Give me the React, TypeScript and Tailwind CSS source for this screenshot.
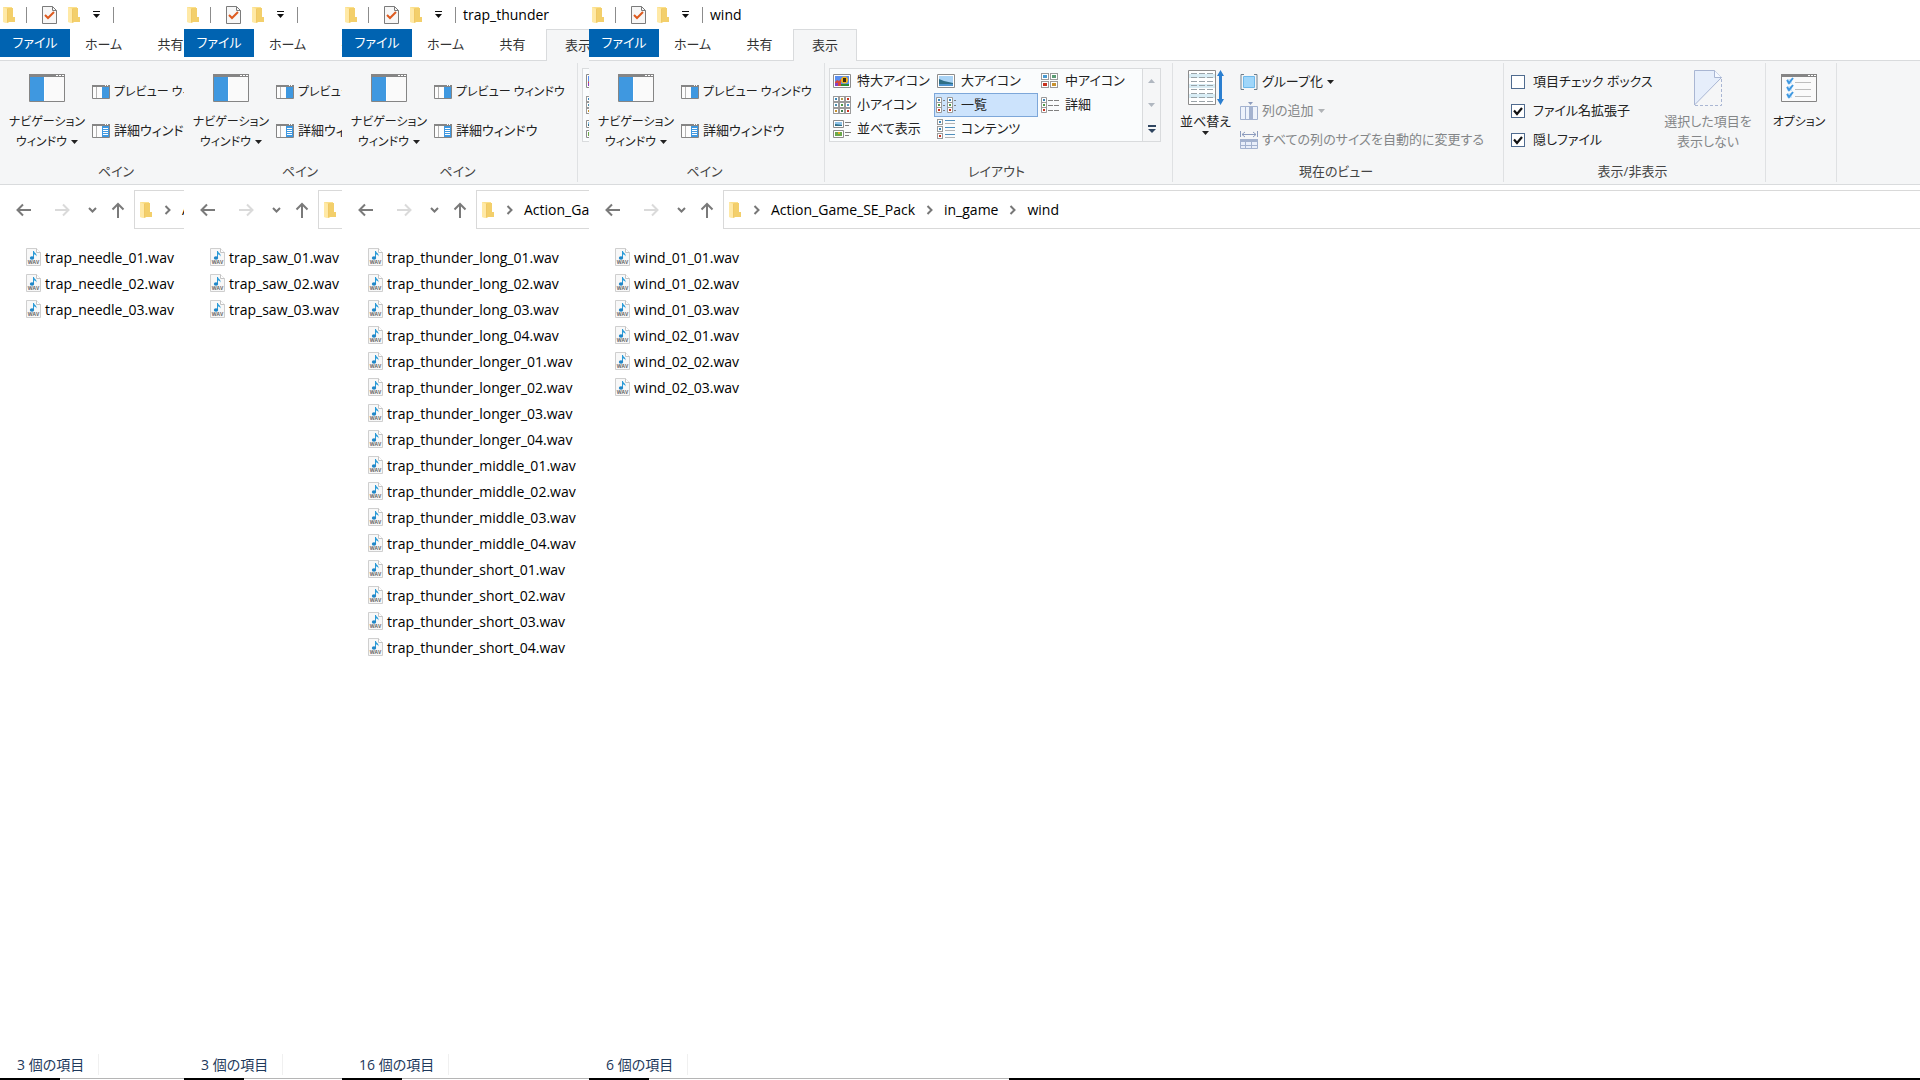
import { useState } from 'react'
import type { ReactNode } from 'react'

type RibbonSize = 'pane' | 'compact' | 'full'

interface ExplorerWindow {
  title: string
  showTitle: boolean
  ribbon: RibbonSize
  tabs: string[]
  path: string[]
  files: string[]
}

const number = (prefix: string, count: number) =>
  Array.from({ length: count }, (_, i) => `${prefix}_0${i + 1}.wav`)

const WINDOWS: ExplorerWindow[] = [
  {
    title: 'trap_needle',
    showTitle: false,
    ribbon: 'pane',
    tabs: ['ホーム', '共有'],
    path: ['Action_Game_SE_Pack'],
    files: number('trap_needle', 3),
  },
  {
    title: 'trap_saw',
    showTitle: false,
    ribbon: 'pane',
    tabs: ['ホーム', '共有'],
    path: [],
    files: number('trap_saw', 3),
  },
  {
    title: 'trap_thunder',
    showTitle: true,
    ribbon: 'compact',
    tabs: ['ホーム', '共有', '表示'],
    path: ['Action_Game_SE_Pack'],
    files: [
      ...number('trap_thunder_long', 4),
      ...number('trap_thunder_longer', 4),
      ...number('trap_thunder_middle', 4),
      ...number('trap_thunder_short', 4),
    ],
  },
  {
    title: 'wind',
    showTitle: true,
    ribbon: 'full',
    tabs: ['ホーム', '共有', '表示'],
    path: ['Action_Game_SE_Pack', 'in_game', 'wind'],
    files: [...number('wind_01', 3), ...number('wind_02', 3)],
  },
]

/* ---------- icons ---------- */

function FolderIcon() {
  return (
    <svg width="13" height="18" viewBox="0 0 13 18" className="shrink-0">
      <path d="M0 1h9v13l-4 3-5-1z" fill="#fbe08c" />
      <path d="M5 2h5v9h2v5H4z" fill="#f3cf6b" />
      <path d="M0 1l4 2v14l-4-1z" fill="#ffe9a6" />
      <path d="M4 3l1-1v14l-1 1z" fill="#f0c865" />
    </svg>
  )
}

function CheckPageIcon() {
  return (
    <svg width="15" height="18" viewBox="0 0 15 18" className="shrink-0">
      <path d="M.5.5h10l4 4v13H.5z" fill="#f7f7f7" stroke="#7b7b7b" />
      <path d="M10.5.5v4h4" fill="none" stroke="#7b7b7b" />
      <path d="M3 9l3 3 6-6" fill="none" stroke="#dd5a1f" strokeWidth="2" />
    </svg>
  )
}

function Caret({ className = 'text-[#222]' }: { className?: string }) {
  return (
    <svg width="7" height="4" viewBox="0 0 7 4" className={`shrink-0 ${className}`}>
      <path d="M0 0h7L3.500 4z" fill="currentColor" />
    </svg>
  )
}

function NavPaneIcon() {
  return (
    <svg width="36" height="28" viewBox="0 0 36 28">
      <path d="M.5.5h35v27H.5z" fill="#fafafa" stroke="#858585" />
      <path d="M0 0h36v3H0z" fill="#858585" />
      <path d="M27 1h2v1h-2zM30 1h2v1h-2zM33 1h2v1h-2z" fill="#fff" />
      <path d="M1 3h14v24H1z" fill="#3f98e0" />
      <path d="M15 3h1v24h-1z" fill="#fff" />
    </svg>
  )
}

function SmallPaneIcon({ lines = false }: { lines?: boolean }) {
  return (
    <svg width="18" height="14" viewBox="0 0 18 14" className="shrink-0">
      <path d="M.5.5h17v13H.5z" fill="#fdfdfd" stroke="#858585" />
      <path d="M0 0h18v2H0z" fill="#858585" />
      <path d="M13 0h1v1h-1zM15 0h1v1h-1z" fill="#fff" />
      <path d="M4 2h1v11H4z" fill="#b5b5b5" />
      <path d="M10 2h7v11h-7z" fill="#3f98e0" />
      {lines && <path d="M11 4.5h5M11 6.5h5M11 8.5h5M11 10.5h5" stroke="#fff" />}
    </svg>
  )
}

function Thumb({ x, y, fill }: { x: number; y: number; fill: string }) {
  return (
    <>
      <rect x={x + 0.5} y={y + 0.5} width="5" height="5" fill="#fff" stroke="#9a9a9a" />
      <rect x={x + 2} y={y + 2} width="2" height="2" fill={fill} />
    </>
  )
}

function ExtraLargeIcon() {
  return (
    <svg width="18" height="14" viewBox="0 0 18 14">
      <path d="M.5.5h17v13H.5z" fill="#fff" stroke="#8c8c8c" />
      <path d="M2 2h14v10H2z" fill="#5a8ff0" />
      <path d="M2 8l2-2 2 1 2-2v7H2z" fill="#d84a3a" />
      <path d="M2 9h3v3H2z" fill="#8a3fc0" />
      <circle cx="11.5" cy="6" r="3.5" fill="#f2b41c" />
      <path d="M10 4h3v4h-3z" fill="#3a2a12" />
      <path d="M8 10h8v2H8z" fill="#2f8a36" />
    </svg>
  )
}

function LargeIcon() {
  return (
    <svg width="18" height="14" viewBox="0 0 18 14">
      <path d="M.5.5h17v13H.5z" fill="#fff" stroke="#8c8c8c" />
      <path d="M2 2h14v10H2z" fill="#a9d3f5" />
      <path d="M2 5l5 2 9 2v3H2z" fill="#2f6f86" />
      <path d="M2 10h14v2H2z" fill="#4f94cf" />
    </svg>
  )
}

function MediumIcon() {
  const cells = [
    [0, 0, '#4a9ad0'],
    [9, 0, '#5b9c74'],
    [0, 8, '#c8321e'],
    [9, 8, '#c8922e'],
  ] as const
  return (
    <svg width="18" height="16" viewBox="0 0 18 16">
      {cells.map(([x, y, fill]) => (
        <g key={fill}>
          <rect x={x + 0.5} y={y + 0.5} width="7" height="6" fill="#fff" stroke="#9a9a9a" />
          <rect x={x + 2} y={y + 2} width="4" height="3" fill={fill} />
        </g>
      ))}
    </svg>
  )
}

function SmallIconsIcon() {
  const fills = ['#3c86b8', '#b09a4a', '#c8321e', '#4b8fae', '#4f9a4a', '#4a9ad0', '#c8922e', '#3f7f4a', '#c8321e']
  return (
    <svg width="18" height="18" viewBox="0 0 18 18">
      {fills.map((fill, i) => (
        <Thumb key={i} x={(i % 3) * 6} y={Math.floor(i / 3) * 6} fill={fill} />
      ))}
    </svg>
  )
}

function ListIcon() {
  return (
    <svg width="20" height="16" viewBox="0 0 20 16">
      {[0, 11].map((x) => (
        <g key={x}>
          <path d={`M${x + 0.5} .5h5v15h-5zM${x} 5.5h6M${x} 10.5h6`} fill="#fff" stroke="#9a9a9a" />
          <path d={`M${x + 2} 2h2v2h-2z`} fill="#3c86b8" />
          <path d={`M${x + 2} 7h2v2h-2z`} fill="#4f9a4a" />
          <path d={`M${x + 2} 12h2v2h-2z`} fill="#c8321e" />
          <path d={`M${x + 7} 3.5h2M${x + 7} 8.5h2M${x + 7} 13.5h2`} stroke="#808080" />
        </g>
      ))}
    </svg>
  )
}

function DetailsIcon() {
  return (
    <svg width="18" height="16" viewBox="0 0 18 16">
      <path d="M.5.5h5v15h-5zM0 5.5h6M0 10.5h6" fill="#fff" stroke="#9a9a9a" />
      <path d="M2 2h2v2H2z" fill="#3c86b8" />
      <path d="M2 7h2v2H2z" fill="#4f9a4a" />
      <path d="M2 12h2v2H2z" fill="#c8321e" />
      <path d="M7 3.5h5m1 0h5M7 8.5h5m1 0h5M7 13.5h5m1 0h5" stroke="#808080" />
    </svg>
  )
}

function TilesIcon() {
  return (
    <svg width="18" height="18" viewBox="0 0 18 18">
      <path d="M.5.5h10v7H.5zM.5 10.5h10v7H.5z" fill="#fff" stroke="#8c8c8c" />
      <path d="M2 2h7v4H2z" fill="#8fc4ea" />
      <path d="M2 4l7 1v1H2z" fill="#2f6f86" />
      <path d="M2 12h7v4H2z" fill="#6aa84a" />
      <path d="M5 12h2v2H5z" fill="#e0aa2a" />
      <path d="M12 2.5h6M12 5.5h4M12 12.5h6M12 15.5h4" stroke="#808080" />
    </svg>
  )
}

function ContentIcon() {
  return (
    <svg width="18" height="20" viewBox="0 0 18 20">
      {[0, 7, 14].map((y) => (
        <Thumb key={y} x={0} y={y} fill={y === 14 ? '#c8321e' : '#3c86b8'} />
      ))}
      <path d="M8 1.5h10M8 8.5h10M8 15.5h10" stroke="#4f8fbd" />
      <path d="M8 4.5h10M8 11.5h10M8 18.5h10" stroke="#b4b4b4" />
    </svg>
  )
}

function SortIcon() {
  return (
    <svg width="36" height="36" viewBox="0 0 36 36">
      <path d="M.5.5h27v34H.5z" fill="#fff" stroke="#8c8c8c" />
      <path d="M1 4h26v4H1zM1 14h26v4H1zM1 24h26v4H1z" fill="#d9edf5" />
      {[4, 8, 12, 16, 20, 24, 28, 32].map((y) => (
        <path key={y} d={`M3 ${y - 0.5}h6m2 0h6m2 0h6`} stroke="#9aa3a8" />
      ))}
      <path d="M32.5 0l3.500 6h-2v23h2l-3.500 6-3.500-6h2V6h-2z" fill="#2b7fd0" />
    </svg>
  )
}

function GroupIcon() {
  return (
    <svg width="18" height="16" viewBox="0 0 18 16">
      <path d="M4 .5H1v15h3M14 .5h3v15h-3" fill="none" stroke="#6f7f8c" />
      <path d="M3.500 2.500h11v11h-11z" fill="#9fd6fa" stroke="#6db8ea" />
    </svg>
  )
}

function AddColumnIcon() {
  return (
    <svg width="18" height="18" viewBox="0 0 18 18">
      <path d="M.5 4.500h17v13H.5z" fill="#eef3fb" stroke="#a3b2cf" />
      <path d="M5.500 4v14M12.500 4v14" stroke="#a3b2cf" />
      <path d="M9 4h3v14H9z" fill="#a3b2cf" />
      <path d="M8 0h5l-2.500 3z" fill="#8b9bbd" />
    </svg>
  )
}

function FitColumnsIcon() {
  return (
    <svg width="18" height="18" viewBox="0 0 18 18">
      <path d="M.5 0v6M17.500 0v6M2 3.500h14M5 1L2 3.500 5 6M13 1l3 2.500L13 6" fill="none" stroke="#8b9bbd" />
      <path d="M.5 8.500h17v9H.5z" fill="#e8eefa" stroke="#a3b2cf" />
      <path d="M0 8h18v3H0z" fill="#a3b2cf" />
      <path d="M5.500 11v7M11.500 11v7M0 14.500h18" stroke="#a3b2cf" />
    </svg>
  )
}

function HideIcon() {
  return (
    <svg width="28" height="36" viewBox="0 0 28 36">
      <path d="M.5 35V.5h20l7 7z" fill="#e6eefb" stroke="#a9b6d3" />
      <path d="M20.500.5v7h7" fill="#f4f8ff" stroke="#a9b6d3" />
      <path d="M27.500 9v26.500H1" fill="none" stroke="#a9b6d3" strokeDasharray="3 2" />
    </svg>
  )
}

function OptionsIcon() {
  return (
    <svg width="36" height="28" viewBox="0 0 36 28">
      <path d="M.5.5h35v27H.5z" fill="#fafafa" stroke="#858585" />
      <path d="M0 0h36v3H0z" fill="#858585" />
      <path d="M27 1h2v1h-2zM30 1h2v1h-2zM33 1h2v1h-2z" fill="#fff" />
      {[4, 11, 18].map((y) => (
        <g key={y} fill="none">
          <path d={`M6 ${y + 1}h5v5h-5z`} fill="#cfe6fa" />
          <path d={`M6 ${y + 2}l2 3 4-5`} stroke="#3f98e0" strokeWidth="2" />
          <path d={`M14 ${y + 4.5}h16`} stroke="#bdbdbd" />
        </g>
      ))}
    </svg>
  )
}

function WavIcon() {
  return (
    <svg width="15" height="18" viewBox="0 0 15 18" className="shrink-0" aria-hidden="true">
      <path d="M.5.5h10l4 4v13H.5z" fill="#f8f8f8" stroke="#cfcfcf" />
      <path d="M10.500.5v4h4" fill="#fff" stroke="#c4c4c4" />
      <path d="M7 3h1c0 2 3 2 2.500 5.500C10 7 9 6.500 8 6.500V10h-1z" fill="#2a9bd8" />
      <ellipse cx="6" cy="10" rx="2.200" ry="1.700" fill="#1f86c8" />
      <text x="7.500" y="16" textAnchor="middle" fontSize="5" fontWeight="700" fill="#666">
        WAV
      </text>
    </svg>
  )
}

function ArrowIcon({ d, width, className }: { d: string; width: number; className: string }) {
  return (
    <svg width={width} height="16" viewBox={`0 0 ${width} 16`} className={className}>
      <path d={d} fill="none" stroke="currentColor" strokeWidth="2" />
    </svg>
  )
}

/* ---------- ribbon ---------- */

function Group({ label, className, children }: { label?: string; className: string; children: ReactNode }) {
  return (
    <div className={`my-0.5 flex shrink-0 flex-col border-r border-[#dfe1e3] ${className}`}>
      <div className="flex h-[97px] items-start">{children}</div>
      <div className="pr-1 text-center text-[13px] leading-[22px] text-[#444]">{label}</div>
    </div>
  )
}

const LAYOUTS = [
  { label: '特大アイコン', icon: <ExtraLargeIcon /> },
  { label: '大アイコン', icon: <LargeIcon /> },
  { label: '中アイコン', icon: <MediumIcon /> },
  { label: '小アイコン', icon: <SmallIconsIcon /> },
  { label: '一覧', icon: <ListIcon /> },
  { label: '詳細', icon: <DetailsIcon /> },
  { label: '並べて表示', icon: <TilesIcon /> },
  { label: 'コンテンツ', icon: <ContentIcon /> },
]

function LayoutGallery({ iconsOnly }: { iconsOnly: boolean }) {
  const [selected, setSelected] = useState('一覧')
  return (
    <div className="mt-[5px] ml-1 flex border border-[#d9dbdd] bg-[#fafcfd]">
      <div className="grid grid-cols-[104px_104px_104px]">
        {LAYOUTS.map(({ label, icon }) => (
          <button
            key={label}
            aria-label={label}
            onClick={() => setSelected(label)}
            className={`flex h-6 items-center border whitespace-nowrap ${
              selected === label ? 'border-[#7da7d9] bg-[#cce3fc]' : 'border-transparent'
            }`}
          >
            <span className="flex w-[22px] shrink-0 justify-center">{icon}</span>
            {!iconsOnly && <span className="pl-1">{label}</span>}
          </button>
        ))}
      </div>
      <div className="flex w-[18px] flex-col border-l border-[#d9dbdd] bg-[#f5f6f7]">
        <button aria-label="上へ" className="flex flex-1 items-center justify-center">
          <Caret className="rotate-180 text-[#b0b7c0]" />
        </button>
        <button aria-label="下へ" className="flex flex-1 items-center justify-center">
          <Caret className="text-[#b0b7c0]" />
        </button>
        <button aria-label="その他" className="flex flex-1 items-center justify-center">
          <svg width="8" height="8" viewBox="0 0 8 8">
            <path d="M0 0h8v2H0zM0 4h8L4 8z" fill="#2f4560" />
          </svg>
        </button>
      </div>
    </div>
  )
}

function CheckRow({ label, initial }: { label: string; initial: boolean }) {
  const [checked, setChecked] = useState(initial)
  return (
    <label className="flex h-[29px] items-center gap-2 whitespace-nowrap">
      <span className="grid shrink-0">
        <input
          type="checkbox"
          checked={checked}
          onChange={() => setChecked(!checked)}
          className="col-start-1 row-start-1 size-[14px] appearance-none border border-[#4f6b8f] bg-white"
        />
        {checked && (
          <svg viewBox="0 0 14 14" className="pointer-events-none col-start-1 row-start-1 size-[14px]">
            <path d="M3 6.500l3 3.500 5-6" fill="none" stroke="#111" strokeWidth="2.200" />
          </svg>
        )}
      </span>
      {label}
    </label>
  )
}

function Ribbon({ size }: { size: RibbonSize }) {
  return (
    <div className="flex h-[124px] border-b border-[#d9dbdd] bg-[#f5f6f7] text-[13px] text-[#222]">
      <Group label="ペイン" className={size === 'pane' ? 'w-[237px] border-transparent' : 'w-[236px]'}>
        <button className="mt-[11px] flex w-[92px] flex-col items-center pl-0.5 text-[12px] leading-5 whitespace-nowrap">
          <NavPaneIcon />
          <span className="mt-2.5">ナビゲーション</span>
          <span className="flex items-center gap-1">
            ウィンドウ <Caret />
          </span>
        </button>
        <div className="flex flex-col pt-[9px]">
          <button className="flex h-[39px] items-center gap-1 text-[12px] whitespace-nowrap">
            <SmallPaneIcon />
            プレビュー ウィンドウ
          </button>
          <button className="flex h-[39px] items-center gap-1 whitespace-nowrap">
            <SmallPaneIcon lines />
            詳細ウィンドウ
          </button>
        </div>
      </Group>
      {size !== 'pane' && (
        <Group label={size === 'full' ? 'レイアウト' : ''} className="w-[348px]">
          <LayoutGallery iconsOnly={size === 'compact'} />
        </Group>
      )}
      {size === 'full' && (
        <>
          <Group label="現在のビュー" className="w-[331px]">
            <button className="mt-[7px] flex w-[67px] flex-col items-center pr-0.5 whitespace-nowrap">
              <SortIcon />
              <span className="mt-[5px] leading-5">並べ替え</span>
              <Caret />
            </button>
            <div className="flex flex-col pt-1">
              <button className="flex h-[29px] items-center gap-1 whitespace-nowrap">
                <GroupIcon />
                グループ化 <Caret />
              </button>
              <button disabled className="flex h-[29px] items-center gap-1 whitespace-nowrap text-[#848688]">
                <AddColumnIcon />
                列の追加 <Caret className="text-[#b0b3b6]" />
              </button>
              <button disabled className="flex h-[29px] items-center gap-1 whitespace-nowrap text-[#848688]">
                <FitColumnsIcon />
                すべての列のサイズを自動的に変更する
              </button>
            </div>
          </Group>
          <Group label="表示/非表示" className="w-[262px]">
            <div className="ml-[7px] flex w-[140px] flex-col pt-1">
              <CheckRow label="項目チェック ボックス" initial={false} />
              <CheckRow label="ファイル名拡張子" initial />
              <CheckRow label="隠しファイル" initial />
            </div>
            <button disabled className="mt-[7px] flex flex-1 flex-col items-center leading-5 whitespace-nowrap text-[#848688]">
              <HideIcon />
              <span className="mt-[5px]">選択した項目を</span>
              <span>表示しない</span>
            </button>
          </Group>
          <Group className="w-[71px]">
            <button className="mt-[11px] flex flex-1 flex-col items-center pr-1 text-[12px] leading-5 whitespace-nowrap">
              <OptionsIcon />
              <span className="mt-2.5">オプション</span>
            </button>
          </Group>
        </>
      )}
    </div>
  )
}

/* ---------- window ---------- */

function TitleBar({ title, showTitle }: { title: string; showTitle: boolean }) {
  return (
    <header className="flex h-[29px] items-center pl-[3px] text-[14px] whitespace-nowrap">
      <FolderIcon />
      <span className="ml-2.5 h-4 border-l border-[#8c8c8c]" />
      <button aria-label="プロパティ" className="ml-[15px]">
        <CheckPageIcon />
      </button>
      <button aria-label="新しいフォルダー" className="ml-[11px]">
        <FolderIcon />
      </button>
      <button aria-label="クイック アクセス ツール バーのカスタマイズ" className="ml-3">
        <svg width="7" height="7" viewBox="0 0 7 7">
          <path d="M0 0h7v1H0zM0 3h7L3.500 7z" fill="#111" />
        </svg>
      </button>
      <span className="ml-[13px] h-4 border-l border-[#8c8c8c]" />
      {showTitle && <h1 className="ml-[7px] text-black">{title}</h1>}
    </header>
  )
}

function Tabs({ tabs }: { tabs: string[] }) {
  return (
    <nav className="flex h-8 border-b border-[#d9dbdd] text-[13px] whitespace-nowrap text-[#333]">
      <button className="h-7 w-[70px] shrink-0 bg-[#0063b1] text-white">ファイル</button>
      {tabs.map((tab) => (
        <button
          key={tab}
          className={
            tab === '表示'
              ? '-mb-px w-16 shrink-0 border border-b-0 border-[#d9dbdd] bg-[#f5f6f7]'
              : 'w-[67px] shrink-0'
          }
        >
          {tab}
        </button>
      ))}
    </nav>
  )
}

function AddressBar({ path }: { path: string[] }) {
  return (
    <div className="flex h-[49px] items-center">
      <button aria-label="戻る" className="ml-4 shrink-0">
        <ArrowIcon width={16} d="M15 8H1.500M7 2.500L1.500 8 7 13.500" className="text-[#7a7a7a]" />
      </button>
      <button aria-label="進む" disabled className="ml-[22px] shrink-0">
        <ArrowIcon width={16} d="M1 8h13.500M9 2.500L14.500 8 9 13.500" className="text-[#dadada]" />
      </button>
      <button aria-label="最近表示した場所" className="ml-[18px] shrink-0">
        <ArrowIcon width={9} d="M1 6l3.500 3.500L8 6" className="text-[#777]" />
      </button>
      <button aria-label="上へ" className="ml-3.5 shrink-0">
        <svg width="14" height="16" viewBox="0 0 14 16" className="text-[#7a7a7a]">
          <path d="M7 16V2M1.500 7.500L7 2l5.500 5.500" fill="none" stroke="currentColor" strokeWidth="2" />
        </svg>
      </button>
      <div className="ml-[9px] flex h-[39px] flex-1 items-center border border-r-0 border-[#d9d9d9] pl-[5px] text-[14px] text-black">
        <FolderIcon />
        {path.map((part) => (
          <span key={part} className="flex shrink-0 items-center">
            <ArrowIcon width={8} d="M1.500 4l4 4-4 4" className="mr-2.5 ml-[11px] text-[#777]" />
            <a href="#" className="whitespace-nowrap">{part}</a>
          </span>
        ))}
      </div>
    </div>
  )
}

function Explorer({ title, showTitle, ribbon, tabs, path, files }: ExplorerWindow) {
  const front = ribbon === 'full'
  return (
    <section aria-label={title} className="flex min-w-0 flex-col overflow-hidden bg-white">
      <TitleBar title={title} showTitle={showTitle} />
      <Tabs tabs={tabs} />
      <Ribbon size={ribbon} />
      <AddressBar path={path} />
      <ul className="flex-1 pt-2.5 pl-[26px] text-[14px] text-black">
        {files.map((file) => (
          <li key={file} className="flex h-[26px] items-center gap-1 whitespace-nowrap">
            <WavIcon />
            {file}
          </li>
        ))}
      </ul>
      <footer className="flex h-7 items-center pl-[17px] text-[14px] whitespace-nowrap text-[#1e395b]">
        <span className="border-r border-[#f0f0f0] pr-3.5">{files.length} 個の項目</span>
      </footer>
      <div className="flex h-0.5">
        <span className="w-[60px] bg-black" />
        <span className={`border-t border-[#b5b5b5] ${front ? 'w-[360px]' : 'flex-1'}`} />
        {front && <span className="flex-1 bg-black" />}
      </div>
    </section>
  )
}

export default function App() {
  return (
    <main className="grid min-h-screen grid-cols-[184fr_158fr_247fr_1331fr] overflow-hidden bg-white font-['Open_Sans','Noto_Sans_CJK_JP',sans-serif] [font-feature-settings:'palt']">
      {WINDOWS.map((win) => (
        <Explorer key={win.title} {...win} />
      ))}
    </main>
  )
}
